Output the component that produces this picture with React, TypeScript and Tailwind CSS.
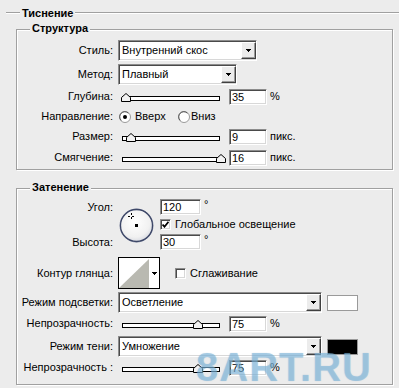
import React from "react";

const sunken =
  "border border-t-[#8c8c8c] border-l-[#8c8c8c] border-r-white border-b-white shadow-[inset_1px_1px_0_#4a4a4a,inset_-1px_-1px_0_#d8d8d8]";

function Caret() {
  return (
    <svg width="5" height="3" viewBox="0 0 5 3" shapeRendering="crispEdges">
      <path d="M0 0h5v1H0zM1 1h3v1H1zM2 2h1v1H2z" fill="#000" />
    </svg>
  );
}

function Select({ value, w }: { value: string; w: string }) {
  return (
    <div className={`flex h-[21px] bg-white ${w} ${sunken}`}>
      <span className="flex-1 pl-[3px] leading-[19px] whitespace-nowrap">{value}</span>
      <div className="my-[1px] w-[15px] flex items-center justify-center bg-[#ececec] border border-t-white border-l-white border-r-[#404040] border-b-[#404040] shadow-[inset_-1px_-1px_0_#9a9a9a]">
        <Caret />
      </div>
    </div>
  );
}

function Num({ v, w = "w-[38px]" }: { v: string; w?: string }) {
  return (
    <div className={`h-[16px] bg-white pl-[2px] leading-[14px] ${w} ${sunken}`}>{v}</div>
  );
}

function Slider({ pos }: { pos: string }) {
  return (
    <div className="relative ml-[4px] w-[98px] h-[17px]">
      <div className="absolute left-0 right-0 top-[8px] h-[5px] border border-black bg-white" />
      <svg className={`absolute top-[5px] ${pos}`} width="10" height="9" viewBox="0 0 10 9">
        <polygon points="0.5,8.5 0.5,4.5 5,0.5 9.5,4.5 9.5,8.5" fill="#f2f2f2" stroke="#000" strokeWidth="1" />
      </svg>
    </div>
  );
}

function SliderRow({ pos, v, unit }: { pos: string; v: string; unit: string }) {
  return (
    <>
      <Slider pos={pos} />
      <div className="ml-[9px]">
        <Num v={v} />
      </div>
      <span className="ml-[3px]">{unit}</span>
    </>
  );
}

function Radio({ on }: { on?: boolean }) {
  return (
    <svg width="12" height="12" viewBox="0 0 12 12">
      <circle cx="6" cy="6" r="5.5" fill="#fff" stroke="#9a9a9a" />
      <path d="M2.2 9.4A5 5 0 0 1 9.4 2.2" fill="none" stroke="#555" strokeWidth="1" />
      {on && <circle cx="6" cy="6" r="2" fill="#000" />}
    </svg>
  );
}

function Check({ on }: { on?: boolean }) {
  return (
    <div className={`w-[11px] h-[11px] bg-white flex items-center justify-center ${sunken}`}>
      {on && (
        <svg width="7" height="7" viewBox="0 0 7 7">
          <path d="M0.5 3.5l2 2.2L6.5 0.8" fill="none" stroke="#000" strokeWidth="1.8" />
        </svg>
      )}
    </div>
  );
}

function Row({ label, className, children }: { label: string; className: string; children: React.ReactNode }) {
  return (
    <div className={`flex items-center ${className}`}>
      <div className="w-[96px] shrink-0 text-right whitespace-nowrap">{label}</div>
      <div className="ml-[5px] flex items-center">{children}</div>
    </div>
  );
}

function Group({ title, className, children }: { title: string; className: string; children: React.ReactNode }) {
  return (
    <div className={`relative ml-[16px] w-[377px] border border-[#a0a0a0] shadow-[inset_1px_1px_0_#fff,1px_1px_0_#fff] ${className}`}>
      <span className="absolute left-[13px] -top-[8px] px-[2px] bg-[#ececec] font-bold leading-[13px]">{title}</span>
      {children}
    </div>
  );
}

function Dial() {
  return (
    <svg className="ml-[6px] mt-[9px]" width="35" height="35" viewBox="0 0 35 35">
      <defs>
        <radialGradient id="dg" cx="45%" cy="40%" r="60%">
          <stop offset="0%" stopColor="#ffffff" />
          <stop offset="75%" stopColor="#f1f1f1" />
          <stop offset="100%" stopColor="#d9dbe2" />
        </radialGradient>
      </defs>
      <circle cx="17.5" cy="17.5" r="16.5" fill="url(#dg)" stroke="#8a92aa" strokeWidth="1" />
      <circle cx="17.5" cy="17.5" r="16" fill="none" stroke="#3d4767" strokeWidth="1.3" />
      <g stroke="#000" strokeWidth="1" shapeRendering="crispEdges">
        <path d="M12 5v2M12 9v2M9 8h2M13 8h2" />
      </g>
      <rect x="16" y="16" width="3" height="3" fill="#000" />
    </svg>
  );
}

export default function App() {
  return (
    <div className="relative w-[399px] h-[388px] overflow-hidden bg-[#ececec] font-['Liberation_Sans',Arial,sans-serif] text-[11px] leading-[13px] text-black">
      {/* Тиснение */}
      <div className="flex items-center h-[12px] mt-[7px] pl-[6px]">
        <div className="w-[14px] h-[2px] border-t border-b border-t-[#a0a0a0] border-b-white" />
        <span className="px-[2px] font-bold">Тиснение</span>
        <div className="flex-1 h-[2px] border-t border-b border-t-[#a0a0a0] border-b-white" />
      </div>

      {/* Структура */}
      <Group title="Структура" className="mt-[10px] h-[141px]">
        <Row label="Стиль:" className="mt-[10px] h-[21px]">
          <Select value="Внутренний скос" w="w-[139px]" />
        </Row>
        <Row label="Метод:" className="mt-[3px] h-[21px]">
          <Select value="Плавный" w="w-[119px]" />
        </Row>
        <Row label="Глубина:" className="mt-[3px] h-[17px]">
          <SliderRow pos="-left-[1px]" v="35" unit="%" />
        </Row>
        <Row label="Направление:" className="mt-[3px] h-[17px]">
          <div className="flex items-center w-[59px] ml-[1px]">
            <Radio on />
            <span className="ml-[4px]">Вверх</span>
          </div>
          <Radio />
          <span className="ml-[1px]">Вниз</span>
        </Row>
        <Row label="Размер:" className="mt-[3px] h-[17px]">
          <SliderRow pos="left-[4px]" v="9" unit="пикс." />
        </Row>
        <Row label="Смягчение:" className="mt-[4px] h-[17px]">
          <SliderRow pos="left-[94px]" v="16" unit="пикс." />
        </Row>
      </Group>

      {/* Затенение */}
      <Group title="Затенение" className="mt-[18px] h-[197px]">
        <div className="flex mt-[10px] h-[51px]">
          <div className="w-[96px] shrink-0 flex flex-col text-right">
            <div className="h-[16px] leading-[16px]">Угол:</div>
            <div className="mt-auto h-[16px] leading-[16px]">Высота:</div>
          </div>
          <Dial />
          <div className="ml-[6px] flex flex-col">
            <div className="flex">
              <Num v="120" w="w-[41px]" />
              <span className="ml-[3px] leading-[10px]">°</span>
            </div>
            <div className="flex items-center mt-[4px] h-[11px]">
              <Check on />
              <span className="ml-[4px] whitespace-nowrap">Глобальное освещение</span>
            </div>
            <div className="flex mt-[4px]">
              <Num v="30" w="w-[41px]" />
              <span className="ml-[3px] leading-[10px]">°</span>
            </div>
          </div>
        </div>

        <Row label="Контур глянца:" className="mt-[7px] h-[32px]">
          <div className="flex w-[42px] h-[32px] border border-black bg-white">
            <svg width="30" height="30" viewBox="0 0 30 30">
              <polygon points="0,30 30,1 30,30" fill="#b9b9b1" />
            </svg>
            <div className="flex-1 flex items-center justify-center">
              <Caret />
            </div>
          </div>
          <div className="ml-[15px]">
            <Check />
          </div>
          <span className="ml-[4px]">Сглаживание</span>
        </Row>

        <Row label="Режим подсветки:" className="mt-[3px] h-[21px]">
          <Select value="Осветление" w="w-[204px]" />
          <div className="ml-[5px] w-[31px] h-[16px] border border-[#9a9a9a] bg-white" />
        </Row>
        <Row label="Непрозрачность:" className="mt-[2px] h-[17px]">
          <SliderRow pos="left-[71px]" v="75" unit="%" />
        </Row>
        <Row label="Режим тени:" className="mt-[4px] h-[21px]">
          <Select value="Умножение" w="w-[204px]" />
          <div className="ml-[5px] w-[31px] h-[16px] border border-[#9a9a9a] bg-black" />
        </Row>
        <Row label="Непрозрачность :" className="mt-[2px] h-[17px]">
          <SliderRow pos="left-[71px]" v="75" unit="%" />
        </Row>
      </Group>

      {/* watermark */}
      <div className="pointer-events-none absolute left-[196px] top-[344px] font-['Liberation_Sans',Arial,sans-serif] text-[40px] leading-[46px] font-bold tracking-[1px] text-[rgba(130,186,220,0.5)] [text-shadow:0_0_1px_rgba(80,140,190,0.35)]">
        8ART.RU
      </div>
    </div>
  );
}
